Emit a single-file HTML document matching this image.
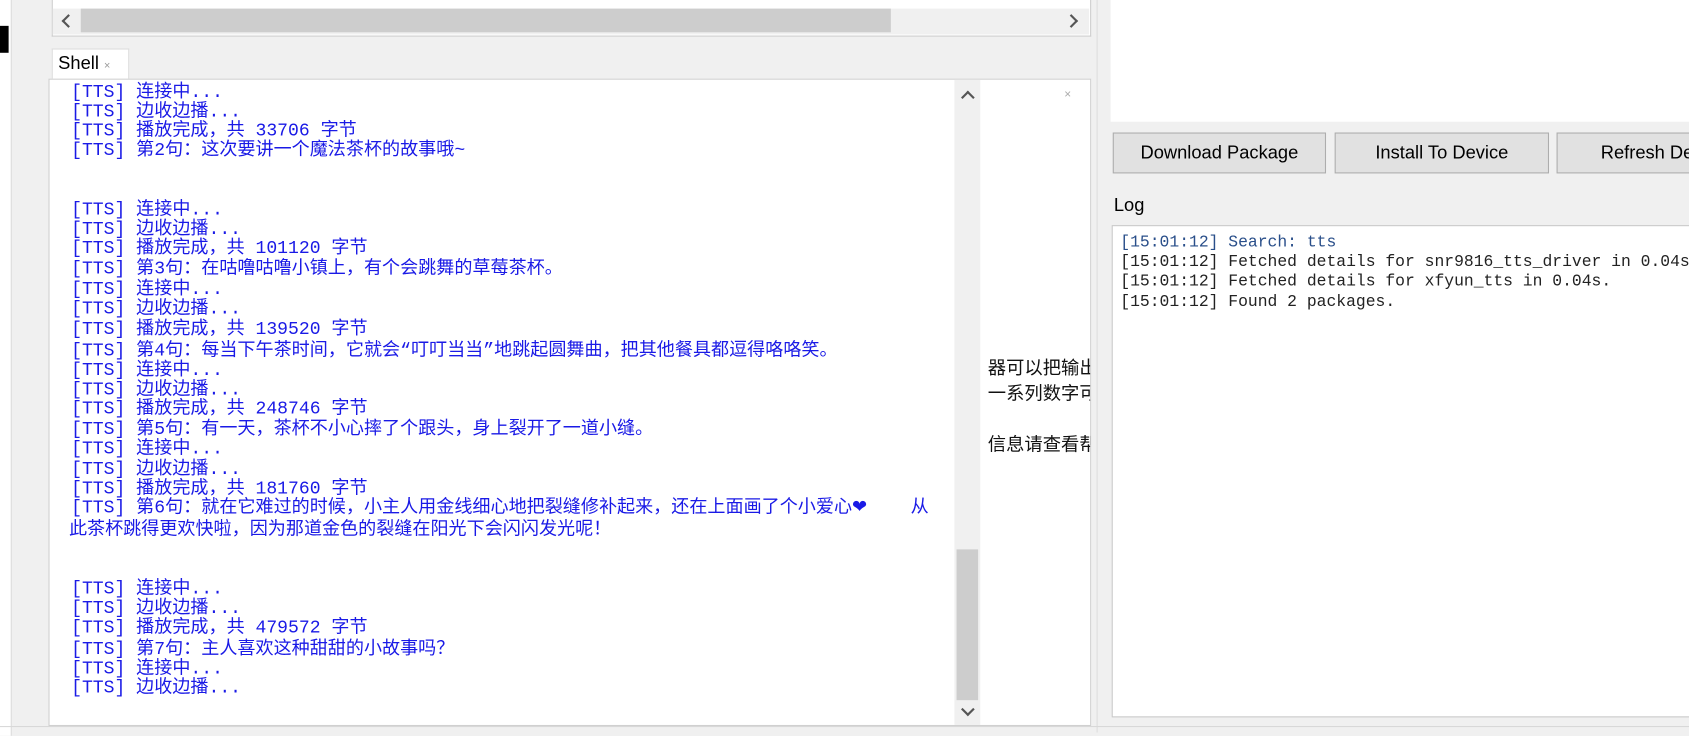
<!DOCTYPE html>
<html><head><meta charset="utf-8"><style>
*{margin:0;padding:0;box-sizing:border-box}
body{width:1689px;height:735px;background:#f0f0f0;overflow:hidden;font-family:"Liberation Sans","Noto Sans CJK SC",sans-serif}
#w{position:absolute;left:0;top:0;width:1568px;height:683px;transform:scale(1.0772);transform-origin:0 0;background:#f0f0f0}
.a{position:absolute}
#t{position:absolute;left:0;top:2px;width:880px;height:600px}
.sh{position:absolute;left:66px;font:16.8px/18px "Liberation Mono","Noto Sans CJK SC",monospace;color:#1a1ae6;white-space:pre}
.lg{position:absolute;left:1040px;font:15.2px/18px "Liberation Mono","Noto Serif CJK SC",monospace;color:#222;white-space:pre}
.btn{position:absolute;top:123px;height:38px;background:#e1e1e1;border:1px solid #adadad;font-size:17px;color:#000;text-align:center;line-height:36px}
.chev{position:absolute;width:9px;height:9px;border-left:2.5px solid #555;border-top:2.5px solid #555}
</style></head><body><div id="w">
<div class="a" style="left:0;top:0;width:10px;height:683px;background:#fff"></div>
<div class="a" style="left:0;top:24px;width:8px;height:25px;background:#000"></div>
<div class="a" style="left:10px;top:0;width:1px;height:683px;background:#ddd"></div>
<div class="a" style="left:48px;top:0;width:965px;height:34px;background:#fff;border:1px solid #ccc;border-top:none"></div>
<div class="a" style="left:49px;top:8px;width:962px;height:24px;background:#f0f0f0"></div>
<div class="a" style="left:75px;top:8px;width:752px;height:22px;background:#cdcdcd"></div>
<div class="chev" style="left:59px;top:15px;transform:rotate(-45deg)"></div>
<div class="chev" style="left:990px;top:15px;transform:rotate(135deg)"></div>
<div class="a" style="left:48px;top:45px;width:72px;height:29px;background:#fff;border:1px solid #ddd;border-bottom:none;font-size:17px;line-height:26px;padding-left:5px">Shell <span style="font-size:10px;color:#999">×</span></div>
<div class="a" style="left:45px;top:73px;width:968px;height:601px;background:#fff;border:1px solid #d0d0d0"></div>
<div class="a" style="left:886px;top:74px;width:24px;height:599px;background:#f0f0f0"></div>
<div class="a" style="left:888px;top:510px;width:20px;height:140px;background:#cdcdcd"></div>
<div class="chev" style="left:894px;top:86px;transform:rotate(45deg)"></div>
<div class="chev" style="left:894px;top:654px;transform:rotate(225deg)"></div>
<div class="a" style="left:988px;top:82px;font-size:11px;color:#aaa">×</div>
<div class="a" style="left:917px;top:330px;font-size:17px;line-height:23.5px;color:#111;white-space:pre;overflow:hidden;width:95px">器可以把输出到
一系列数字可视

信息请查看帮助</div>
<div id="t">
<div class="sh" style="top:76px">[TTS] 连接中...</div>
<div class="sh" style="top:94px">[TTS] 边收边播...</div>
<div class="sh" style="top:112px">[TTS] 播放完成，共 33706 字节</div>
<div class="sh" style="top:130px">[TTS] 第2句：这次要讲一个魔法茶杯的故事哦~</div>
<div class="sh" style="top:185px">[TTS] 连接中...</div>
<div class="sh" style="top:203px">[TTS] 边收边播...</div>
<div class="sh" style="top:221px">[TTS] 播放完成，共 101120 字节</div>
<div class="sh" style="top:240px">[TTS] 第3句：在咕噜咕噜小镇上，有个会跳舞的草莓茶杯。</div>
<div class="sh" style="top:259px">[TTS] 连接中...</div>
<div class="sh" style="top:277px">[TTS] 边收边播...</div>
<div class="sh" style="top:296px">[TTS] 播放完成，共 139520 字节</div>
<div class="sh" style="top:316px">[TTS] 第4句：每当下午茶时间，它就会“叮叮当当”地跳起圆舞曲，把其他餐具都逗得咯咯笑。</div>
<div class="sh" style="top:334px">[TTS] 连接中...</div>
<div class="sh" style="top:352px">[TTS] 边收边播...</div>
<div class="sh" style="top:370px">[TTS] 播放完成，共 248746 字节</div>
<div class="sh" style="top:389px">[TTS] 第5句：有一天，茶杯不小心摔了个跟头，身上裂开了一道小缝。</div>
<div class="sh" style="top:407px">[TTS] 连接中...</div>
<div class="sh" style="top:426px">[TTS] 边收边播...</div>
<div class="sh" style="top:444px">[TTS] 播放完成，共 181760 字节</div>
<div class="sh" style="top:462px">[TTS] 第6句：就在它难过的时候，小主人用金线细心地把裂缝修补起来，还在上面画了个小爱心❤    从</div>
<div class="sh" style="top:482px;left:64px">此茶杯跳得更欢快啦，因为那道金色的裂缝在阳光下会闪闪发光呢！</div>
<div class="sh" style="top:537px">[TTS] 连接中...</div>
<div class="sh" style="top:555px">[TTS] 边收边播...</div>
<div class="sh" style="top:573px">[TTS] 播放完成，共 479572 字节</div>
<div class="sh" style="top:593px">[TTS] 第7句：主人喜欢这种甜甜的小故事吗？</div>
<div class="sh" style="top:611px">[TTS] 连接中...</div>
<div class="sh" style="top:629px">[TTS] 边收边播...</div>
</div>
<div class="a" style="left:1018px;top:0;width:1px;height:680px;background:#ddd"></div>
<div class="a" style="left:1031px;top:0;width:537px;height:113px;background:#fff"></div>
<div class="btn" style="left:1033px;width:198px">Download Package</div>
<div class="btn" style="left:1239px;width:199px">Install To Device</div>
<div class="btn" style="left:1445px;width:260px;text-align:left;padding-left:40px">Refresh Devices</div>
<div class="a" style="left:1034px;top:181px;font-size:17px">Log</div>
<div class="a" style="left:1032px;top:209px;width:680px;height:457px;background:#fff;border:1px solid #c8c8c8"></div>
<div class="lg" style="top:216px;color:#2a4f8a">[15:01:12] Search: tts</div>
<div class="lg" style="top:234px">[15:01:12] Fetched details for snr9816_tts_driver in 0.04s.</div>
<div class="lg" style="top:252px">[15:01:12] Fetched details for xfyun_tts in 0.04s.</div>
<div class="lg" style="top:271px">[15:01:12] Found 2 packages.</div>
<div class="a" style="left:0;top:674px;width:1568px;height:1px;background:#d8d8d8"></div>
</div></body></html>
